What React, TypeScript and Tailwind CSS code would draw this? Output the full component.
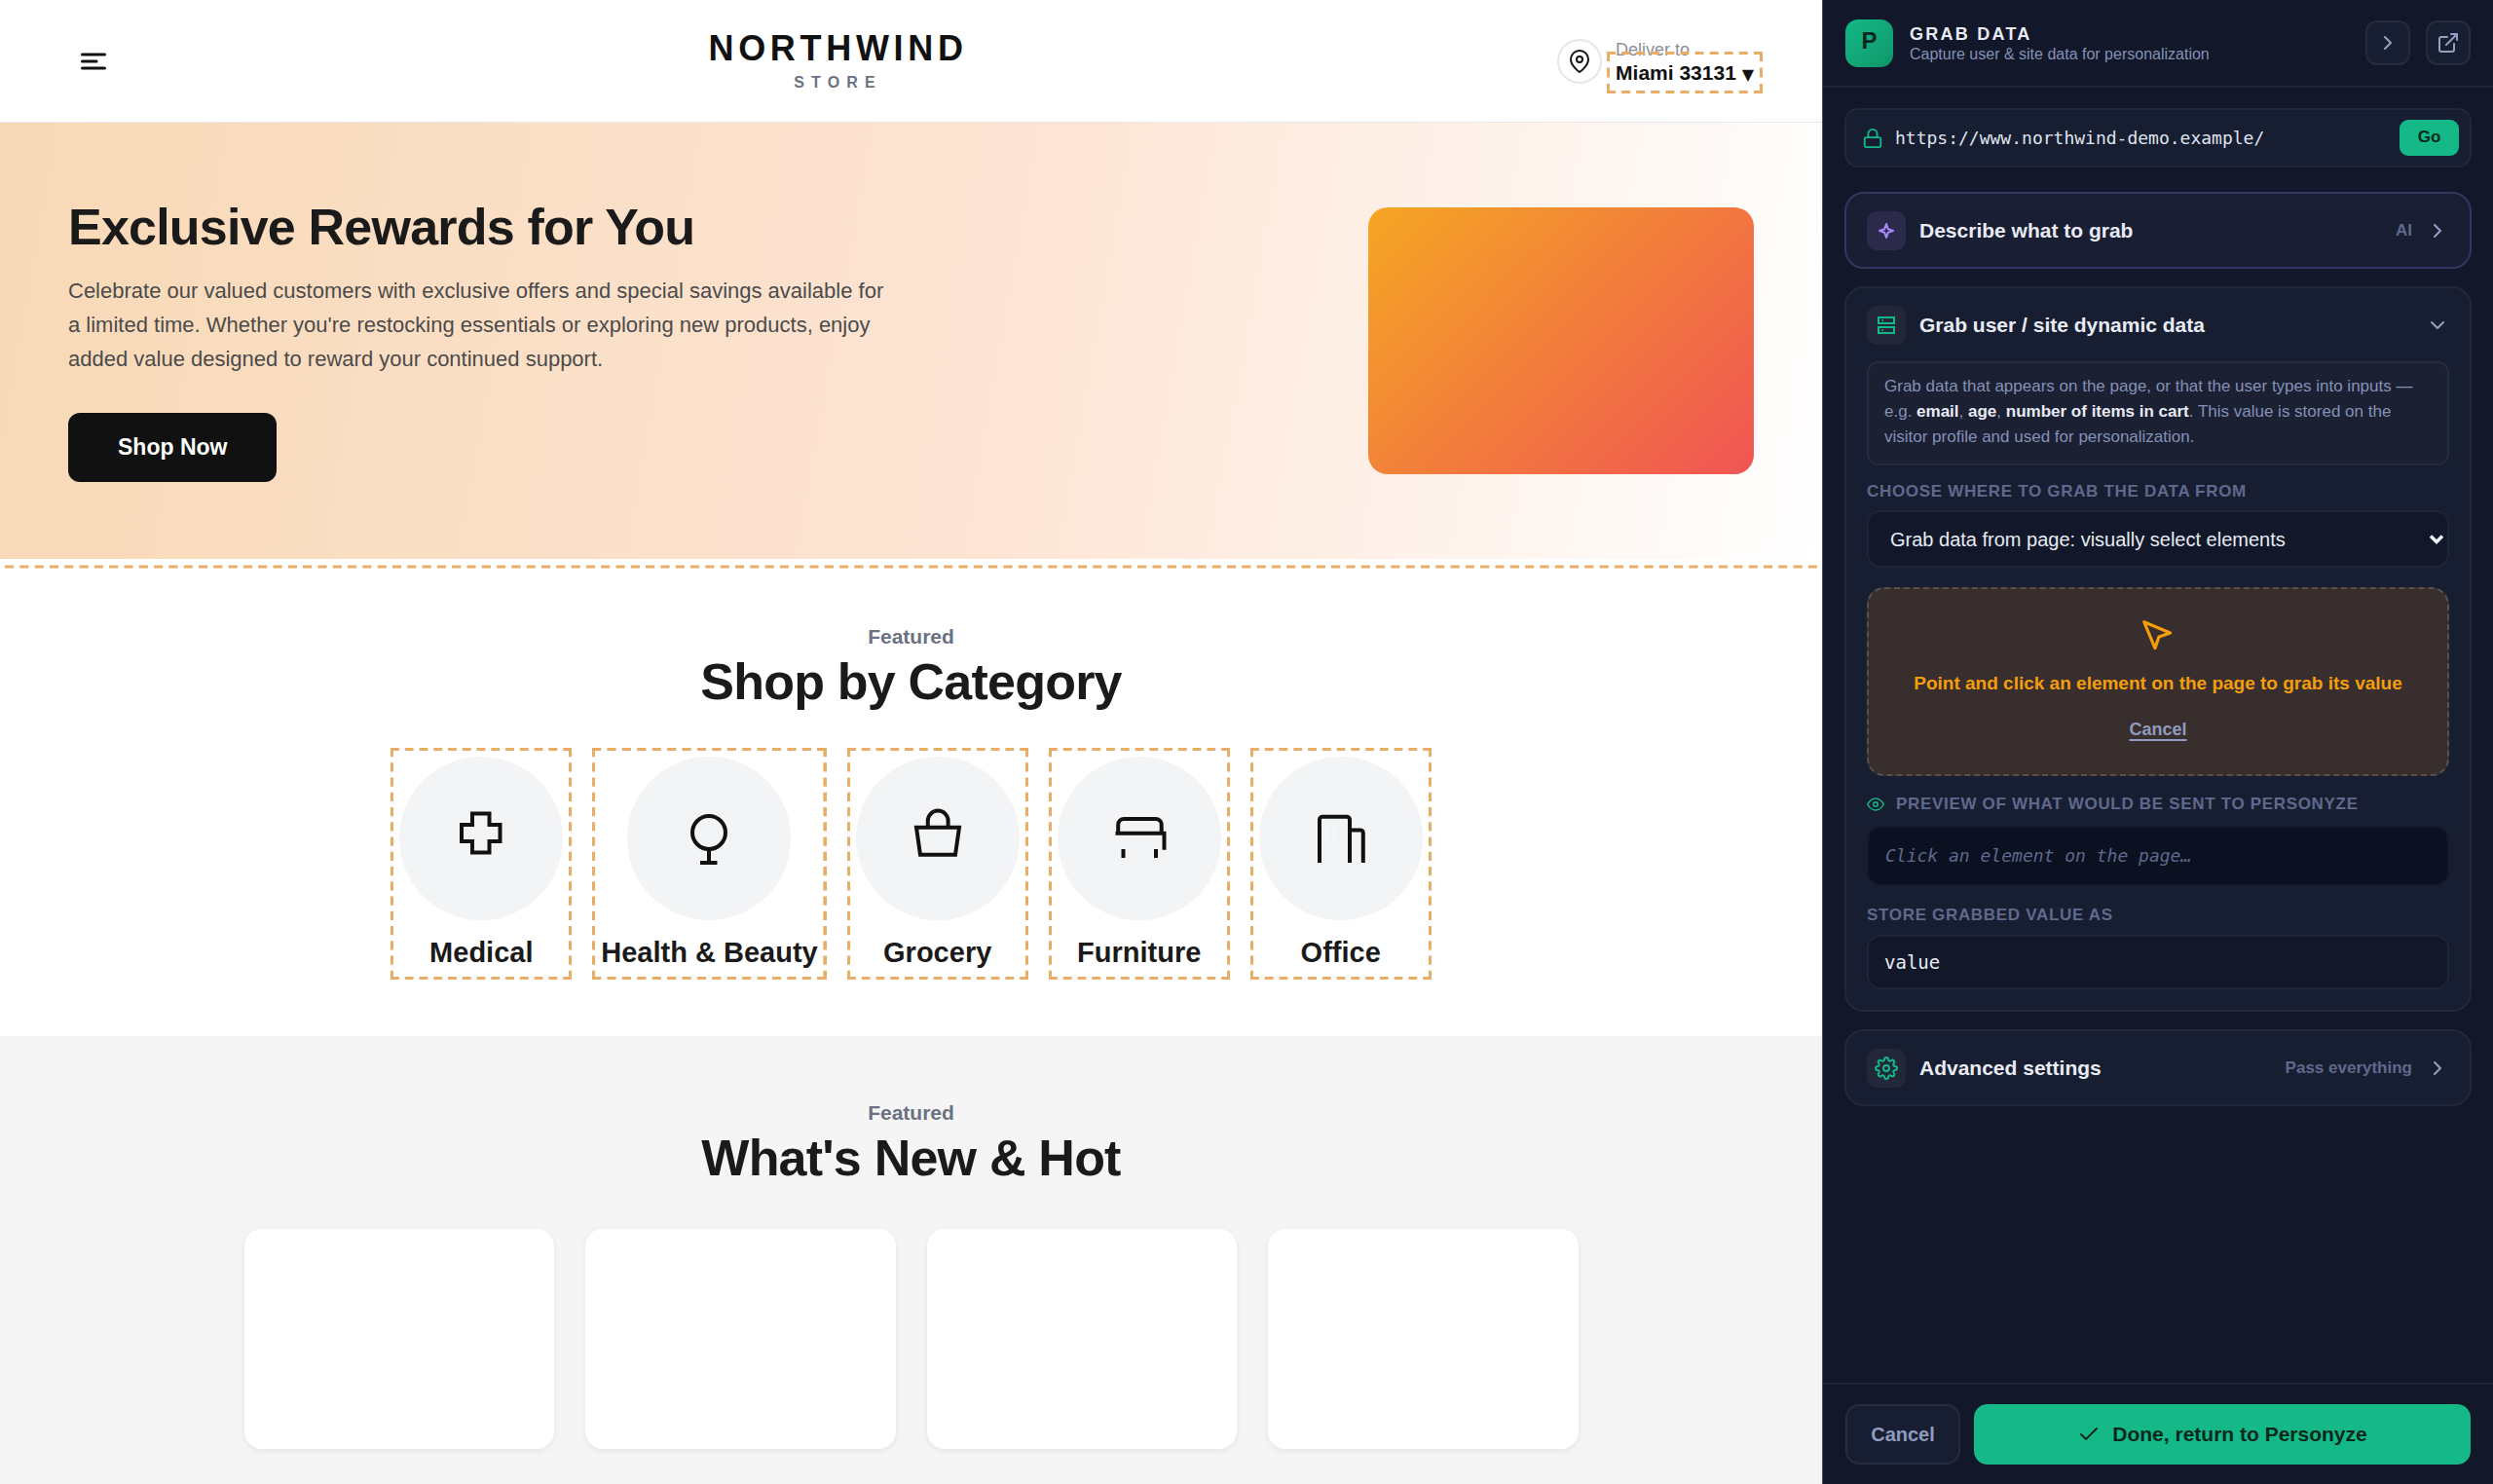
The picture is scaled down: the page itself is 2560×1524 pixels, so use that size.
import React, { useState } from 'react';
import { FiCheck, FiChevronDown, FiChevronRight, FiExternalLink, FiEye, FiLock, FiMapPin, FiSettings } from 'react-icons/fi';

interface Category {
  name: string;
  icon: React.ReactNode;
  dashes: number;
}

const CATEGORIES: Category[] = [
  {
    name: 'Medical',
    dashes: 12,
    icon: <path d="M23 6.5h17.5v11.5h11v17h-11v11.5h-17.5v-11.5h-11v-17h11z" />,
  },
  {
    name: 'Health & Beauty',
    dashes: 15,
    icon: (
      <>
        <circle cx="32" cy="26" r="17" />
        <path d="M32 43v14M23 57h17.5" />
      </>
    ),
  },
  {
    name: 'Grocery',
    dashes: 12,
    icon: <path d="M10 20.8h44l-4 28H14zM21.8 21v-7a10.4 10.4 0 0 1 20.8 0v7" />,
  },
  {
    name: 'Furniture',
    dashes: 12,
    icon: <path d="M10.2 27v-9a6 6 0 0 1 6-6h32.5a6 6 0 0 1 6 6v9M7.5 26.7h50v17M15.5 43v9M49 43v9" />,
  },
  {
    name: 'Office',
    dashes: 12,
    icon: (
      <>
        <path d="M10 57V12.8a3 3 0 0 1 3-3h25a3 3 0 0 1 3 3V57M41 23.4h10.8a3 3 0 0 1 3 3V57" />
        <path d="M21.5 20v4M30 20v4M21.5 30v4M30 30v4" stroke="#e8eaee" strokeWidth="1" />
      </>
    ),
  },
];

// Marks an element that can be picked. The dash counts keep a full dash at each corner,
// and the svg clips the outer half of each 6px stroke.
const PickOutline: React.FC<{ across: number; down: number }> = ({ across, down }) => (
  <svg className="pointer-events-none absolute -inset-[9px] h-[calc(100%+18px)] w-[calc(100%+18px)] overflow-hidden" stroke="#e8ad66" strokeWidth="6" strokeDasharray="9 6" aria-hidden="true">
    <line x1="0" y1="0" x2="100%" y2="0" pathLength={across * 15 + 9} />
    <line x1="0" y1="100%" x2="100%" y2="100%" pathLength={across * 15 + 9} />
    <line x1="0" y1="0" x2="0" y2="100%" pathLength={down * 15 + 9} />
    <line x1="100%" y1="0" x2="100%" y2="100%" pathLength={down * 15 + 9} />
  </svg>
);

const SectionTitle: React.FC<{ children: React.ReactNode }> = ({ children }) => (
  <div className="text-center font-bold">
    <p className="text-[21px] leading-[26px] text-gray-500">Featured</p>
    <h2 className="mt-[3px] text-[52px] leading-[60px] tracking-[-0.015em] text-[#1a1a1a]">{children}</h2>
  </div>
);

const Storefront: React.FC = () => (
  <main className="min-w-0 flex-1 overflow-hidden bg-white">
    <header className="flex h-[126px] items-center justify-between border-b border-gray-200 px-[70px]">
      <button aria-label="Menu" className="flex w-[52px] justify-center">
        <svg className="h-[18px] w-[26px]" viewBox="0 0 26 18" fill="none" stroke="#111" strokeWidth="3" strokeLinecap="round">
          <path d="M1.5 2h23M1.5 9h14.5M1.5 16h23" />
        </svg>
      </button>
      <div className="text-center font-bold">
        <div className="text-4xl leading-[42px] tracking-[0.13em] text-[#111]">NORTHWIND</div>
        <div className="mt-[3px] text-base leading-[22px] tracking-[0.45em] text-gray-500">STORE</div>
      </div>
      <div className="flex items-center gap-[14px]">
        <span className="flex size-[46px] items-center justify-center rounded-full border-2 border-gray-200 text-[#111]">
          <FiMapPin className="size-6" />
        </span>
        <div className="pt-[3px]">
          <div className="text-lg leading-[21px] text-[#8b8f98]">Deliver to</div>
          <button className="relative block text-[21px] leading-[25px] font-bold text-[#111]">
            Miami 33131 <span className="font-['DejaVu_Sans',sans-serif] text-base leading-none">▼</span>
            <PickOutline across={10} down={2} />
          </button>
        </div>
      </div>
    </header>

    <section className="flex h-[448px] items-center justify-between bg-[linear-gradient(100deg,#f8d9b6_0%,#fde4d4_55%,#ffffff_100%)] px-[70px]">
      <div>
        <h1 className="text-[52px] leading-[57px] font-bold tracking-[-0.015em] text-[#1a1a1a]">Exclusive Rewards for You</h1>
        <p className="mt-[19px] max-w-[850px] text-[22px] leading-[35px] text-[#4b4b4b]">
          Celebrate our valued customers with exclusive offers and special savings available for a limited time. Whether
          you're restocking essentials or exploring new products, enjoy added value designed to reward your continued
          support.
        </p>
        <button className="mt-[38px] rounded-xl bg-[#111] px-[51px] py-[22px] text-[23px] leading-[27px] font-bold text-white">Shop Now</button>
      </div>
      <div className="h-[274px] w-[396px] rounded-[20px] bg-[linear-gradient(135deg,#f5a623,#f05454)]" />
    </section>

    <section className="pb-[67px]">
      <svg className="mx-auto block h-[10px] w-[calc(100%-10px)]" stroke="#e8ad66" strokeWidth="3" strokeDasharray="9 6" aria-hidden="true">
        <line x1="0" y1="8" x2="100%" y2="8" pathLength={121 * 15 + 9} />
      </svg>
      <div className="pt-[57px]">
        <SectionTitle>Shop by Category</SectionTitle>
      </div>
      <div className="mt-[47px] flex justify-center gap-[39px]">
        {CATEGORIES.map(c => (
          <a key={c.name} href="#" className="relative flex flex-col items-center">
            <span className="flex size-[168px] items-center justify-center rounded-full bg-gray-100">
              <svg className="size-16" viewBox="0 0 64 64" fill="none" stroke="#111" strokeWidth="4">
                {c.icon}
              </svg>
            </span>
            <span className="mt-[14px] text-[29px] leading-[38px] font-bold text-[#1a1a1a]">{c.name}</span>
            <PickOutline across={c.dashes} down={15} />
          </a>
        ))}
      </div>
    </section>

    <section className="bg-[#f5f5f5] py-[66px]">
      <SectionTitle>What's New &amp; Hot</SectionTitle>
      <div className="mx-auto mt-[43px] grid max-w-[1370px] grid-cols-4 gap-8">
        {[1, 2, 3, 4].map(n => (
          <div key={n} className="h-[226px] rounded-[18px] bg-white shadow-[0_2px_6px_rgba(0,0,0,0.07)]" />
        ))}
      </div>
    </section>
  </main>
);

const Tile: React.FC<{ className: string; children: React.ReactNode }> = ({ className, children }) => (
  <span className={`flex size-10 shrink-0 items-center justify-center rounded-[10px] ${className}`}>{children}</span>
);

interface CardHeaderProps {
  icon: React.ReactNode;
  title: string;
  note?: string;
  open?: boolean;
  onClick?: () => void;
}

const CardHeader: React.FC<CardHeaderProps> = ({ icon, title, note, open, onClick }) => (
  <button onClick={onClick} aria-expanded={!!open} className="flex w-full items-center px-[21px] pt-[18px] pb-[17px] text-left">
    {icon}
    <span className="ml-[14px] flex-1 text-[21px] leading-6 font-bold text-[#e8ebf4]">{title}</span>
    {note && <span className="mr-[14px] text-[17px] leading-5 font-bold text-[#5f698c]">{note}</span>}
    {open ? <FiChevronDown className="size-6 text-[#94a0c0]" /> : <FiChevronRight className="size-6 text-[#94a0c0]" />}
  </button>
);

const GrabPanel: React.FC = () => {
  const [url, setUrl] = useState('https://www.northwind-demo.example/');
  const [storeAs, setStoreAs] = useState('value');

  return (
    <aside className="flex w-[689px] shrink-0 flex-col border-l border-[#4a5262] bg-[#121829]">
      <header className="flex h-[90px] items-center border-b-2 border-[#1f2538] px-[23px]">
        <span className="flex size-[49px] items-center justify-center rounded-[13px] bg-[linear-gradient(135deg,#14b987,#109669)] pb-1 text-2xl font-bold text-[#06281d]">P</span>
        <div className="ml-[17px] flex-1 pt-0.5">
          <h2 className="text-lg leading-[22px] font-bold tracking-[0.125em] text-[#e8ebf4]">GRAB DATA</h2>
          <p className="text-base leading-5 text-[#8491b5]">Capture user &amp; site data for personalization</p>
        </div>
        <button aria-label="Collapse" className="flex size-[46px] items-center justify-center rounded-xl border-2 border-[#262c3f] bg-[#181e31] text-[#94a0c0]">
          <FiChevronRight className="size-6" />
        </button>
        <button aria-label="Open in new window" className="ml-4 flex size-[46px] items-center justify-center rounded-xl border-2 border-[#262c3f] bg-[#181e31] text-[#94a0c0]">
          <FiExternalLink className="size-6" />
        </button>
      </header>

      <div className="flex-1 px-[22px] pt-[21px]">
        <div className="flex h-[61px] items-center rounded-[14px] border-2 border-[#22283b] bg-[#181e31] pr-[11px] pl-4">
          <FiLock className="size-[22px] text-[#12b886]" />
          <input
            aria-label="Page address"
            value={url}
            onChange={e => setUrl(e.target.value)}
            className="ml-3 min-w-0 flex-1 bg-transparent font-['DejaVu_Sans_Mono',monospace] text-lg text-[#dfe3ee] outline-none"
          />
          <button className="h-[37px] w-[61px] rounded-[9px] bg-[#14b987] pb-0.5 text-[17px] font-bold text-[#06281d]">Go</button>
        </div>

        <div className="mt-[25px] rounded-[20px] border-2 border-[#37345f] bg-[linear-gradient(180deg,#1b1e35,#181e31)]">
          <CardHeader
            title="Describe what to grab"
            note="AI"
            icon={
              <Tile className="bg-[#2b2a4b]">
                <svg className="size-5" viewBox="0 0 20 20" fill="none" stroke="#a78bfa" strokeWidth="2" strokeLinejoin="round">
                  <path d="M10 3l1.8 5.2L17 10l-5.2 1.8L10 17l-1.8-5.2L3 10l5.2-1.8z" />
                </svg>
              </Tile>
            }
          />
        </div>

        <div className="mt-[18px] rounded-[20px] border-2 border-[#22283b] bg-[#181e31]">
          <CardHeader
            title="Grab user / site dynamic data"
            open
            icon={
              <Tile className="bg-[#22273a]">
                <svg className="size-5" viewBox="0 0 20 20" fill="none" stroke="#12b886" strokeWidth="2">
                  <rect x="2" y="2" width="16" height="6" />
                  <rect x="2" y="12" width="16" height="6" />
                  <path d="M5.5 5h1.5M5.5 15h1.5" />
                </svg>
              </Tile>
            }
          />
          <div className="px-[21px] pb-[21px]">
            <p className="rounded-xl border-2 border-[#262c3f] bg-[#1b2033] px-4 pt-[11px] pb-[14px] text-[17px] leading-[26px] text-[#8491b5]">
              Grab data that appears on the page, or that the user types into inputs — e.g.{' '}
              <b className="text-[#e8ebf4]">email</b>, <b className="text-[#e8ebf4]">age</b>,{' '}
              <b className="text-[#e8ebf4]">number of items in cart</b>. This value is stored on the visitor profile and
              used for personalization.
            </p>

            <label htmlFor="source" className="mt-[17px] block text-[17px] leading-5 font-bold tracking-[0.04em] text-[#5f698c]">CHOOSE WHERE TO GRAB THE DATA FROM</label>
            <div className="relative mt-[9px]">
              <select id="source" className="block h-[59px] w-full appearance-none rounded-[14px] border-2 border-[#1f2538] bg-[#121829] pr-10 pl-[22px] text-xl text-[#e8ebf4] outline-none">
                <option>Grab data from page: visually select elements</option>
              </select>
              <svg className="pointer-events-none absolute top-[25px] right-[5px] h-[10px] w-[16px]" viewBox="0 0 16 10" fill="none" stroke="#f1f3f9" strokeWidth="3.5">
                <path d="M2 1.5l6 6 6-6" />
              </svg>
            </div>

            <div className="mt-5 flex h-[194px] flex-col items-center rounded-[18px] border-2 border-dashed border-[#57504e] bg-[#382e2d] pt-[29px] font-bold">
              <svg className="size-[38px]" viewBox="0 0 24 24" fill="none" stroke="#f59e0b" strokeWidth="2" strokeLinejoin="round">
                <path d="M3 3l7.07 16.97 2.51-7.39 7.39-2.51L3 3z" />
              </svg>
              <p className="mt-[18px] text-[19px] leading-6 text-[#f59e0b]">Point and click an element on the page to grab its value</p>
              <button className="mt-[23px] text-lg leading-6 text-[#8f9bbf] underline decoration-2 underline-offset-4">Cancel</button>
            </div>

            <div className="mt-[19px] flex items-center text-[17px] leading-5 font-bold tracking-[0.04em] text-[#5f698c]">
              <FiEye className="mr-3 size-[18px] text-[#12b886]" />
              PREVIEW OF WHAT WOULD BE SENT TO PERSONYZE
            </div>
            <div className="mt-3 flex h-[62px] items-center rounded-[14px] border-2 border-[#141a2b] bg-[#0b1120] px-[17px] font-['DejaVu_Sans_Mono',monospace] text-lg text-[#5f698c] italic">
              Click an element on the page…
            </div>

            <label htmlFor="store-as" className="mt-5 block text-[17px] leading-5 font-bold tracking-[0.04em] text-[#5f698c]">STORE GRABBED VALUE AS</label>
            <input
              id="store-as"
              value={storeAs}
              onChange={e => setStoreAs(e.target.value)}
              className="mt-[10px] block h-14 w-full rounded-[14px] border-2 border-[#1f2538] bg-[#121829] px-4 font-['DejaVu_Sans_Mono',monospace] text-[19px] text-[#e8ebf4] outline-none"
            />
          </div>
        </div>

        <div className="mt-[18px] rounded-[20px] border-2 border-[#22283b] bg-[#181e31]">
          <CardHeader
            title="Advanced settings"
            note="Pass everything"
            icon={
              <Tile className="bg-[#22273a]">
                <FiSettings className="size-6 text-[#12b886]" />
              </Tile>
            }
          />
        </div>
      </div>

      <footer className="flex gap-[14px] border-t-2 border-[#1f2538] px-[23px] py-5 text-xl font-bold">
        <button className="h-[62px] w-[118px] rounded-[14px] border-2 border-[#262c3f] bg-[#181e31] text-[#8f9bbf]">Cancel</button>
        <button className="flex h-[62px] flex-1 items-center justify-center gap-3 rounded-[14px] bg-[#14b987] text-[21px] text-[#06281d]">
          <FiCheck className="size-6" />
          Done, return to Personyze
        </button>
      </footer>
    </aside>
  );
};

const App: React.FC = () => (
  <div className="flex h-screen font-['Liberation_Sans',Arial,sans-serif]">
    <Storefront />
    <GrabPanel />
  </div>
);

export default App;
